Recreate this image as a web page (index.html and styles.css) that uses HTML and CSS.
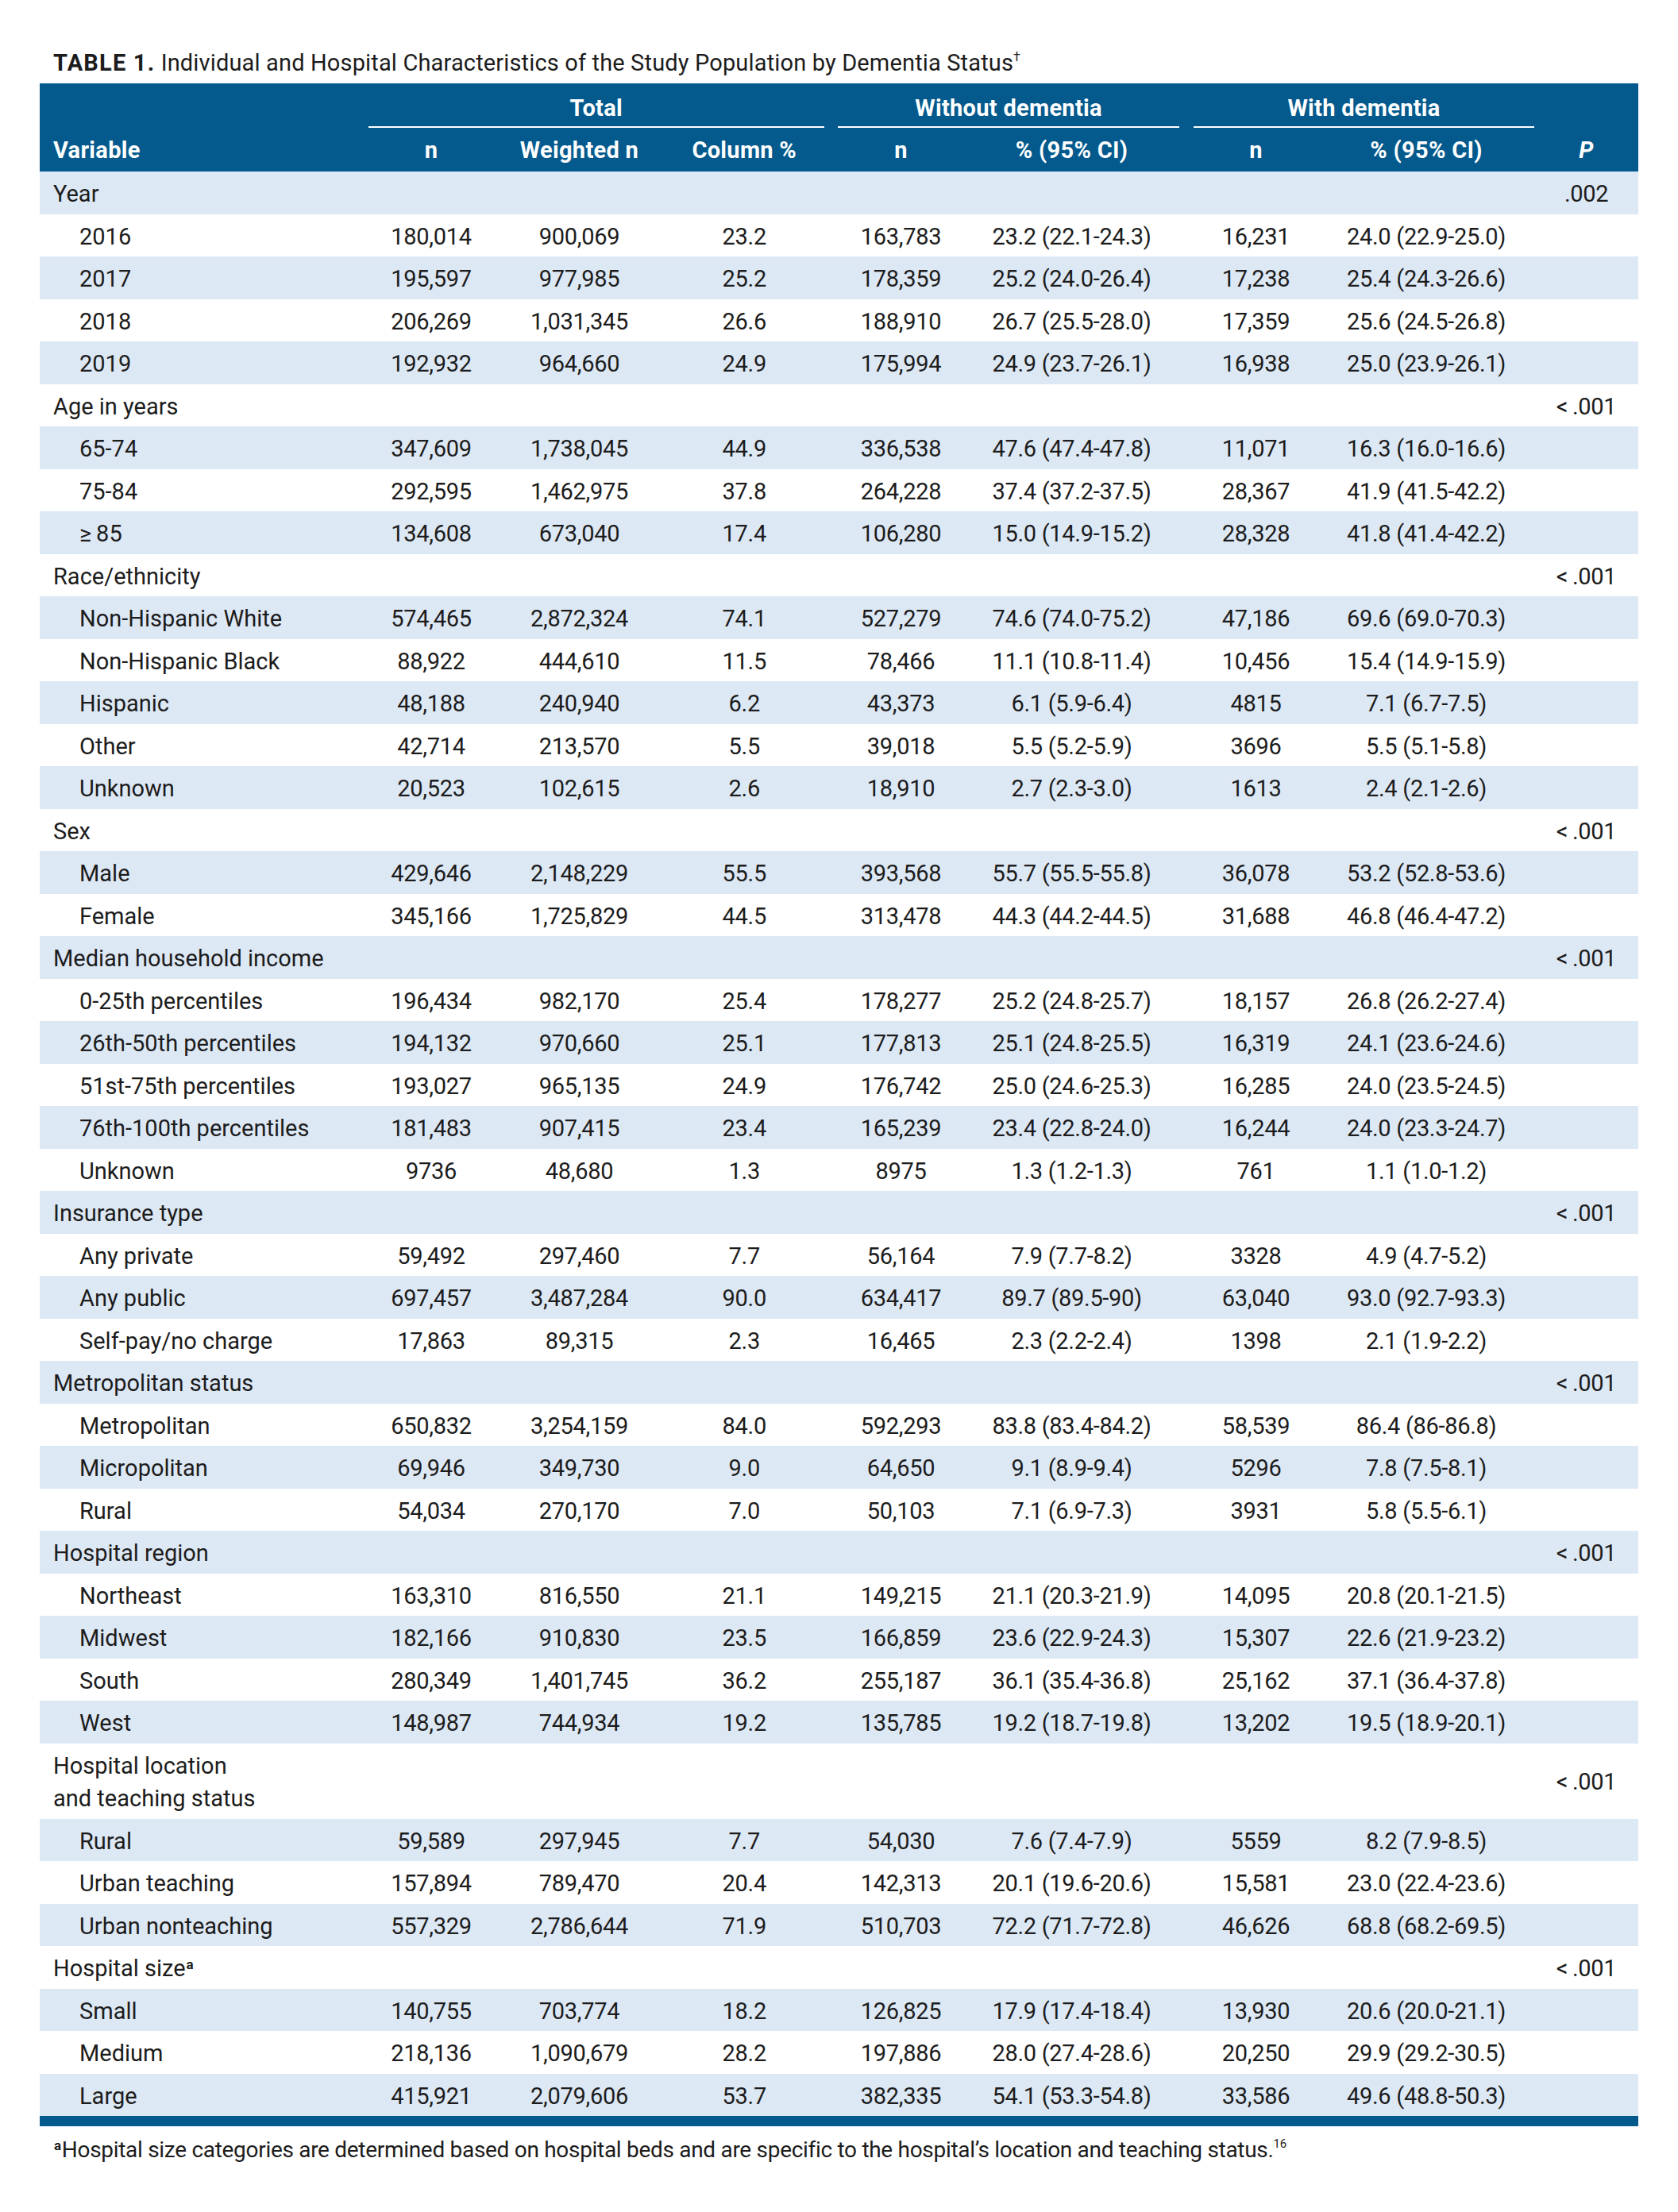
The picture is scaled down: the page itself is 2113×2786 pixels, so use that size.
FILE: index.html
```html
<!DOCTYPE html>
<html lang="en">
<head>
<meta charset="utf-8">
<title>Table 1</title>
<link rel="stylesheet" href="styles.css">
</head>
<body>
<div class="page">
  <p class="title"><b>TABLE 1.</b> Individual and Hospital Characteristics of the Study Population by Dementia Status<sup class="dag">†</sup></p>
  <table class="data">
    <colgroup>
      <col class="c-var"><col class="c-n"><col class="c-wn"><col class="c-pct"><col class="c-gap">
      <col class="c-n2"><col class="c-ci"><col class="c-gap2"><col class="c-n3"><col class="c-ci2"><col class="c-p">
    </colgroup>
    <thead>
      <tr class="hr1">
        <th></th>
        <th colspan="3" class="grp">Total</th>
        <th></th>
        <th colspan="2" class="grp">Without dementia</th>
        <th></th>
        <th colspan="2" class="grp">With dementia</th>
        <th></th>
      </tr>
      <tr class="hr2">
        <th class="lbl">Variable</th>
        <th>n</th><th>Weighted n</th><th>Column %</th><th></th>
        <th>n</th><th>% (95% CI)</th><th></th>
        <th>n</th><th>% (95% CI)</th>
        <th class="pcol"><i>P</i></th>
      </tr>
    </thead>
    <tbody>
      <tr><td class="lbl">Year</td><td></td><td></td><td></td><td></td><td></td><td></td><td></td><td></td><td></td><td>.002</td></tr>
      <tr><td class="sub">2016</td><td>180,014</td><td>900,069</td><td>23.2</td><td></td><td>163,783</td><td>23.2 (22.1-24.3)</td><td></td><td>16,231</td><td>24.0 (22.9-25.0)</td><td></td></tr>
      <tr><td class="sub">2017</td><td>195,597</td><td>977,985</td><td>25.2</td><td></td><td>178,359</td><td>25.2 (24.0-26.4)</td><td></td><td>17,238</td><td>25.4 (24.3-26.6)</td><td></td></tr>
      <tr><td class="sub">2018</td><td>206,269</td><td>1,031,345</td><td>26.6</td><td></td><td>188,910</td><td>26.7 (25.5-28.0)</td><td></td><td>17,359</td><td>25.6 (24.5-26.8)</td><td></td></tr>
      <tr><td class="sub">2019</td><td>192,932</td><td>964,660</td><td>24.9</td><td></td><td>175,994</td><td>24.9 (23.7-26.1)</td><td></td><td>16,938</td><td>25.0 (23.9-26.1)</td><td></td></tr>
      <tr><td class="lbl">Age in years</td><td></td><td></td><td></td><td></td><td></td><td></td><td></td><td></td><td></td><td>&lt;&#8201;.001</td></tr>
      <tr><td class="sub">65-74</td><td>347,609</td><td>1,738,045</td><td>44.9</td><td></td><td>336,538</td><td>47.6 (47.4-47.8)</td><td></td><td>11,071</td><td>16.3 (16.0-16.6)</td><td></td></tr>
      <tr><td class="sub">75-84</td><td>292,595</td><td>1,462,975</td><td>37.8</td><td></td><td>264,228</td><td>37.4 (37.2-37.5)</td><td></td><td>28,367</td><td>41.9 (41.5-42.2)</td><td></td></tr>
      <tr><td class="sub">≥&#8201;85</td><td>134,608</td><td>673,040</td><td>17.4</td><td></td><td>106,280</td><td>15.0 (14.9-15.2)</td><td></td><td>28,328</td><td>41.8 (41.4-42.2)</td><td></td></tr>
      <tr><td class="lbl">Race/ethnicity</td><td></td><td></td><td></td><td></td><td></td><td></td><td></td><td></td><td></td><td>&lt;&#8201;.001</td></tr>
      <tr><td class="sub">Non-Hispanic White</td><td>574,465</td><td>2,872,324</td><td>74.1</td><td></td><td>527,279</td><td>74.6 (74.0-75.2)</td><td></td><td>47,186</td><td>69.6 (69.0-70.3)</td><td></td></tr>
      <tr><td class="sub">Non-Hispanic Black</td><td>88,922</td><td>444,610</td><td>11.5</td><td></td><td>78,466</td><td>11.1 (10.8-11.4)</td><td></td><td>10,456</td><td>15.4 (14.9-15.9)</td><td></td></tr>
      <tr><td class="sub">Hispanic</td><td>48,188</td><td>240,940</td><td>6.2</td><td></td><td>43,373</td><td>6.1 (5.9-6.4)</td><td></td><td>4815</td><td>7.1 (6.7-7.5)</td><td></td></tr>
      <tr><td class="sub">Other</td><td>42,714</td><td>213,570</td><td>5.5</td><td></td><td>39,018</td><td>5.5 (5.2-5.9)</td><td></td><td>3696</td><td>5.5 (5.1-5.8)</td><td></td></tr>
      <tr><td class="sub">Unknown</td><td>20,523</td><td>102,615</td><td>2.6</td><td></td><td>18,910</td><td>2.7 (2.3-3.0)</td><td></td><td>1613</td><td>2.4 (2.1-2.6)</td><td></td></tr>
      <tr><td class="lbl">Sex</td><td></td><td></td><td></td><td></td><td></td><td></td><td></td><td></td><td></td><td>&lt;&#8201;.001</td></tr>
      <tr><td class="sub">Male</td><td>429,646</td><td>2,148,229</td><td>55.5</td><td></td><td>393,568</td><td>55.7 (55.5-55.8)</td><td></td><td>36,078</td><td>53.2 (52.8-53.6)</td><td></td></tr>
      <tr><td class="sub">Female</td><td>345,166</td><td>1,725,829</td><td>44.5</td><td></td><td>313,478</td><td>44.3 (44.2-44.5)</td><td></td><td>31,688</td><td>46.8 (46.4-47.2)</td><td></td></tr>
      <tr><td class="lbl">Median household income</td><td></td><td></td><td></td><td></td><td></td><td></td><td></td><td></td><td></td><td>&lt;&#8201;.001</td></tr>
      <tr><td class="sub">0-25th percentiles</td><td>196,434</td><td>982,170</td><td>25.4</td><td></td><td>178,277</td><td>25.2 (24.8-25.7)</td><td></td><td>18,157</td><td>26.8 (26.2-27.4)</td><td></td></tr>
      <tr><td class="sub">26th-50th percentiles</td><td>194,132</td><td>970,660</td><td>25.1</td><td></td><td>177,813</td><td>25.1 (24.8-25.5)</td><td></td><td>16,319</td><td>24.1 (23.6-24.6)</td><td></td></tr>
      <tr><td class="sub">51st-75th percentiles</td><td>193,027</td><td>965,135</td><td>24.9</td><td></td><td>176,742</td><td>25.0 (24.6-25.3)</td><td></td><td>16,285</td><td>24.0 (23.5-24.5)</td><td></td></tr>
      <tr><td class="sub">76th-100th percentiles</td><td>181,483</td><td>907,415</td><td>23.4</td><td></td><td>165,239</td><td>23.4 (22.8-24.0)</td><td></td><td>16,244</td><td>24.0 (23.3-24.7)</td><td></td></tr>
      <tr><td class="sub">Unknown</td><td>9736</td><td>48,680</td><td>1.3</td><td></td><td>8975</td><td>1.3 (1.2-1.3)</td><td></td><td>761</td><td>1.1 (1.0-1.2)</td><td></td></tr>
      <tr><td class="lbl">Insurance type</td><td></td><td></td><td></td><td></td><td></td><td></td><td></td><td></td><td></td><td>&lt;&#8201;.001</td></tr>
      <tr><td class="sub">Any private</td><td>59,492</td><td>297,460</td><td>7.7</td><td></td><td>56,164</td><td>7.9 (7.7-8.2)</td><td></td><td>3328</td><td>4.9 (4.7-5.2)</td><td></td></tr>
      <tr><td class="sub">Any public</td><td>697,457</td><td>3,487,284</td><td>90.0</td><td></td><td>634,417</td><td>89.7 (89.5-90)</td><td></td><td>63,040</td><td>93.0 (92.7-93.3)</td><td></td></tr>
      <tr><td class="sub">Self-pay/no charge</td><td>17,863</td><td>89,315</td><td>2.3</td><td></td><td>16,465</td><td>2.3 (2.2-2.4)</td><td></td><td>1398</td><td>2.1 (1.9-2.2)</td><td></td></tr>
      <tr><td class="lbl">Metropolitan status</td><td></td><td></td><td></td><td></td><td></td><td></td><td></td><td></td><td></td><td>&lt;&#8201;.001</td></tr>
      <tr><td class="sub">Metropolitan</td><td>650,832</td><td>3,254,159</td><td>84.0</td><td></td><td>592,293</td><td>83.8 (83.4-84.2)</td><td></td><td>58,539</td><td>86.4 (86-86.8)</td><td></td></tr>
      <tr><td class="sub">Micropolitan</td><td>69,946</td><td>349,730</td><td>9.0</td><td></td><td>64,650</td><td>9.1 (8.9-9.4)</td><td></td><td>5296</td><td>7.8 (7.5-8.1)</td><td></td></tr>
      <tr><td class="sub">Rural</td><td>54,034</td><td>270,170</td><td>7.0</td><td></td><td>50,103</td><td>7.1 (6.9-7.3)</td><td></td><td>3931</td><td>5.8 (5.5-6.1)</td><td></td></tr>
      <tr><td class="lbl">Hospital region</td><td></td><td></td><td></td><td></td><td></td><td></td><td></td><td></td><td></td><td>&lt;&#8201;.001</td></tr>
      <tr><td class="sub">Northeast</td><td>163,310</td><td>816,550</td><td>21.1</td><td></td><td>149,215</td><td>21.1 (20.3-21.9)</td><td></td><td>14,095</td><td>20.8 (20.1-21.5)</td><td></td></tr>
      <tr><td class="sub">Midwest</td><td>182,166</td><td>910,830</td><td>23.5</td><td></td><td>166,859</td><td>23.6 (22.9-24.3)</td><td></td><td>15,307</td><td>22.6 (21.9-23.2)</td><td></td></tr>
      <tr><td class="sub">South</td><td>280,349</td><td>1,401,745</td><td>36.2</td><td></td><td>255,187</td><td>36.1 (35.4-36.8)</td><td></td><td>25,162</td><td>37.1 (36.4-37.8)</td><td></td></tr>
      <tr><td class="sub">West</td><td>148,987</td><td>744,934</td><td>19.2</td><td></td><td>135,785</td><td>19.2 (18.7-19.8)</td><td></td><td>13,202</td><td>19.5 (18.9-20.1)</td><td></td></tr>
      <tr><td class="lbl">Hospital location<br>and teaching status</td><td></td><td></td><td></td><td></td><td></td><td></td><td></td><td></td><td></td><td>&lt;&#8201;.001</td></tr>
      <tr><td class="sub">Rural</td><td>59,589</td><td>297,945</td><td>7.7</td><td></td><td>54,030</td><td>7.6 (7.4-7.9)</td><td></td><td>5559</td><td>8.2 (7.9-8.5)</td><td></td></tr>
      <tr><td class="sub">Urban teaching</td><td>157,894</td><td>789,470</td><td>20.4</td><td></td><td>142,313</td><td>20.1 (19.6-20.6)</td><td></td><td>15,581</td><td>23.0 (22.4-23.6)</td><td></td></tr>
      <tr><td class="sub">Urban nonteaching</td><td>557,329</td><td>2,786,644</td><td>71.9</td><td></td><td>510,703</td><td>72.2 (71.7-72.8)</td><td></td><td>46,626</td><td>68.8 (68.2-69.5)</td><td></td></tr>
      <tr><td class="lbl">Hospital size<sup class="fn">a</sup></td><td></td><td></td><td></td><td></td><td></td><td></td><td></td><td></td><td></td><td>&lt;&#8201;.001</td></tr>
      <tr><td class="sub">Small</td><td>140,755</td><td>703,774</td><td>18.2</td><td></td><td>126,825</td><td>17.9 (17.4-18.4)</td><td></td><td>13,930</td><td>20.6 (20.0-21.1)</td><td></td></tr>
      <tr><td class="sub">Medium</td><td>218,136</td><td>1,090,679</td><td>28.2</td><td></td><td>197,886</td><td>28.0 (27.4-28.6)</td><td></td><td>20,250</td><td>29.9 (29.2-30.5)</td><td></td></tr>
      <tr><td class="sub">Large</td><td>415,921</td><td>2,079,606</td><td>53.7</td><td></td><td>382,335</td><td>54.1 (53.3-54.8)</td><td></td><td>33,586</td><td>49.6 (48.8-50.3)</td><td></td></tr>
    </tbody>
    <tfoot>
      <tr class="bar"><td colspan="11"></td></tr>
    </tfoot>
  </table>
  <p class="footnote"><sup class="fn">a</sup>Hospital size categories are determined based on hospital beds and are specific to the hospital’s location and teaching status.<sup class="ref">16</sup></p>
</div>
</body>
</html>
```

FILE: styles.css
```css
html, body {
  margin: 0;
  padding: 0;
  background: #ffffff;
}

body {
  font-family: Roboto, "Liberation Sans", Arial, sans-serif;
  color: #1c1c1c;
}

.page {
  padding: 61px 50px 40px 50px;
}

.title {
  margin: 0 0 8px 0;
  padding-left: 17px;
  font-size: 29px;
  line-height: 36px;
  letter-spacing: 0.15px;
  color: #1c1c1c;
}

.title b {
  font-weight: 700;
  letter-spacing: 1.2px;
}

.dag {
  font-size: 16px;
  vertical-align: 12px;
  line-height: 0;
}

table.data {
  width: 2013px;
  table-layout: fixed;
  border-collapse: separate;
  border-spacing: 0;
  font-size: 29px;
  letter-spacing: -0.3px;
}

.c-var { width: 414px; }
.c-n { width: 158px; }
.c-wn { width: 215px; }
.c-pct { width: 200.5px; }
.c-gap { width: 17.5px; }
.c-n2 { width: 159px; }
.c-ci { width: 271px; }
.c-gap2 { width: 18px; }
.c-n3 { width: 157px; }
.c-ci2 { width: 272px; }
.c-p { width: 131px; }

thead {
  background: #045a8d;
  color: #ffffff;
}

thead th {
  font-weight: 700;
  padding: 0;
  text-align: center;
  vertical-align: middle;
  line-height: 36px;
  white-space: nowrap;
  letter-spacing: 0.3px;
}

.hr1 { height: 56px; }
.hr2 { height: 55px; }

.hr1 th {
  padding-top: 7px;
}

thead th.grp {
  border-bottom: 2px solid #ffffff;
}

thead th.lbl {
  text-align: left;
  padding-left: 17px;
}

thead th.pcol i {
  font-style: italic;
}

tbody td {
  padding: 8px 0 4px 0;
  line-height: 41.5px;
  text-align: center;
  vertical-align: middle;
  white-space: nowrap;
}

tbody tr {
  height: 53.5px;
}

tbody tr:nth-child(odd) {
  background: #dde8f5;
}

tbody td.lbl {
  text-align: left;
  padding-left: 17px;
  letter-spacing: 0;
}

tbody td.sub {
  text-align: left;
  padding-left: 50px;
  letter-spacing: 0;
}

.fn {
  font-size: 17px;
  font-weight: 700;
  vertical-align: 9px;
  line-height: 0;
  margin-left: 1px;
}

tfoot .bar td {
  height: 13px;
  padding: 0;
  background: #045a8d;
  line-height: 0;
  font-size: 0;
}

.footnote {
  margin: 12px 0 0 0;
  padding-left: 18px;
  font-size: 28px;
  line-height: 36px;
  letter-spacing: -0.3px;
  color: #1c1c1c;
}

.footnote .fn {
  margin-left: 0;
  margin-right: 1px;
}

.ref {
  font-size: 15px;
  vertical-align: 12px;
  line-height: 0;
}
```
